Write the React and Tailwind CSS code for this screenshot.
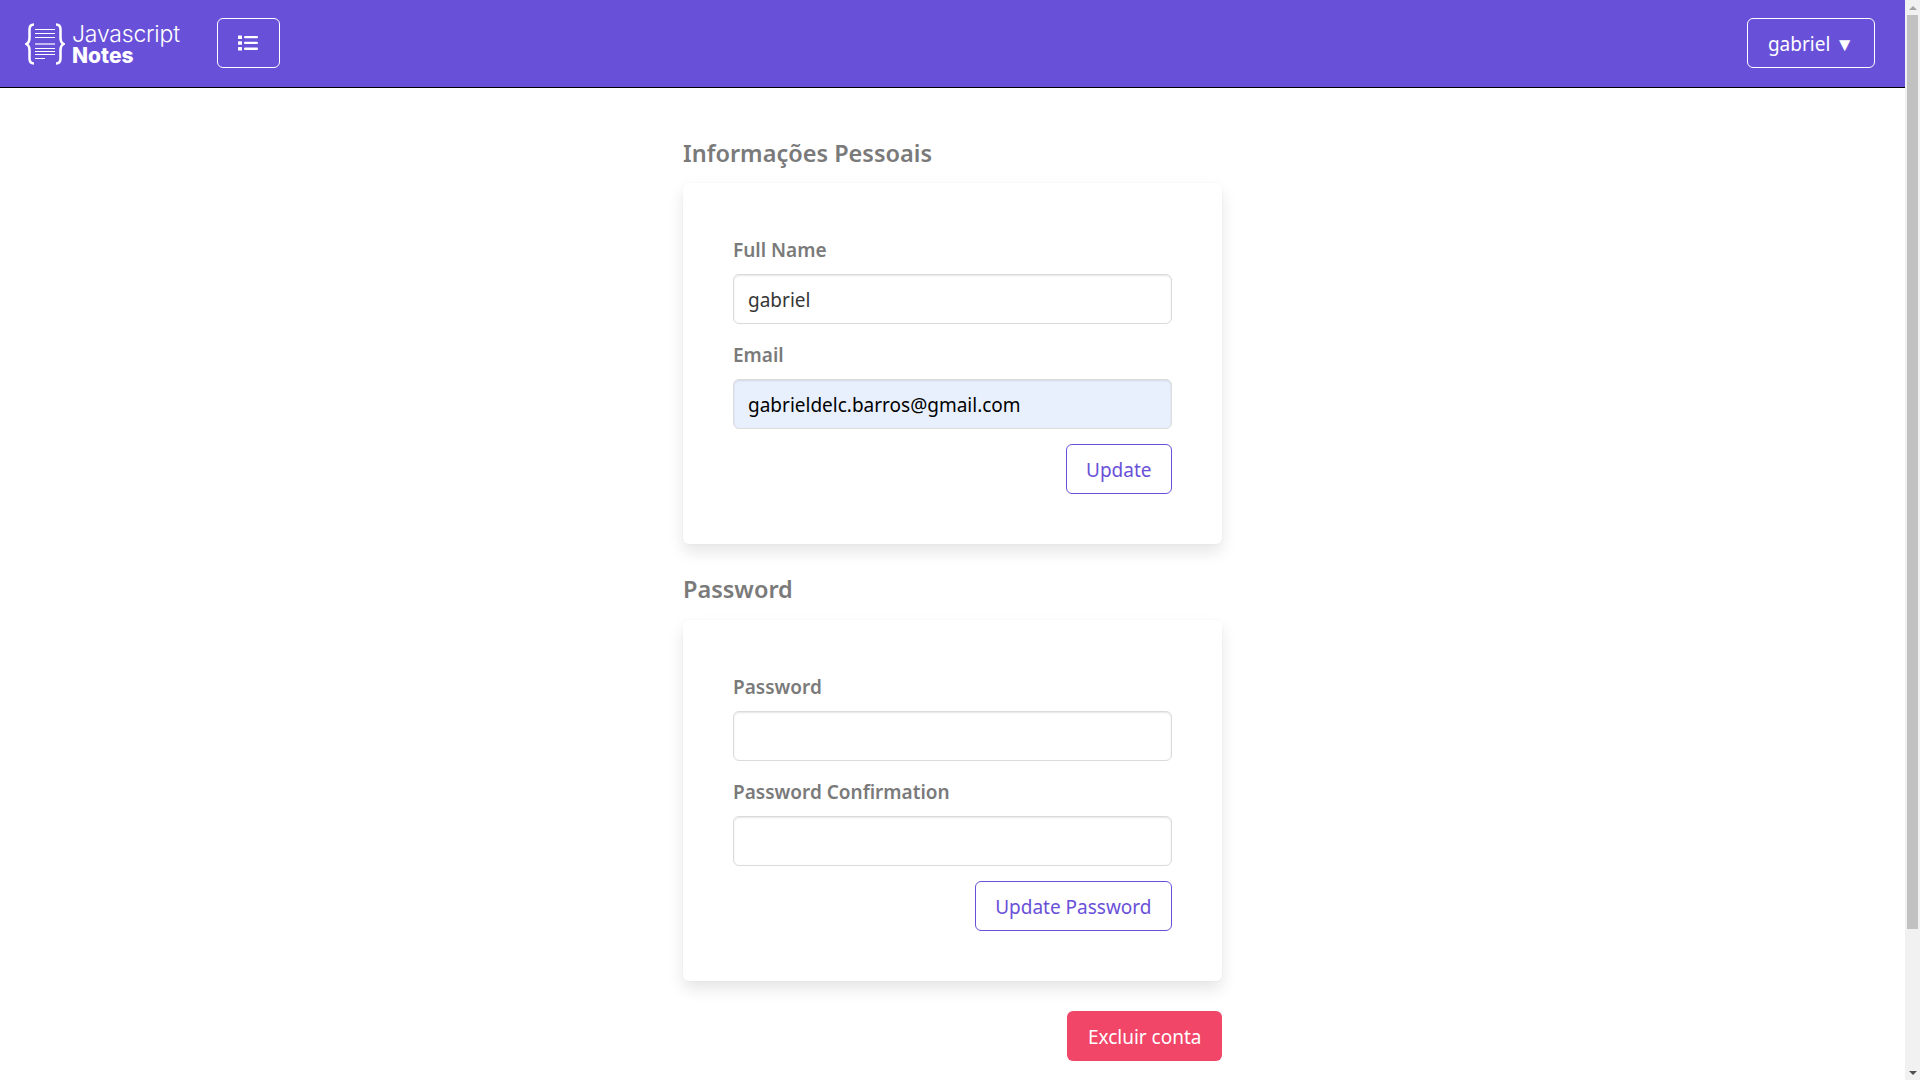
const FONT = "font-['Noto_Sans',sans-serif]";

function Logo() {
  return (
    <div className="flex items-center gap-[7px]">
      <svg width="40" height="42" viewBox="0 0 40 42" fill="none" stroke="white">
        <path d="M9 1.500C5.500 1.500 4.500 3.500 4.500 6.500v8.500c0 3-1 5-3 6 2 1 3 3 3 6v8.500c0 3 1 5 4.500 5" strokeWidth="2.500" />
        <path d="M31 1.500c3.500 0 4.500 2 4.500 5v8.500c0 3 1 5 3 6-2 1-3 3-3 6v8.500c0 3-1 5-4.500 5" strokeWidth="2.500" />
        <path d="M10 6.500h20M10 10.500h20M10 14.500h20M10 25.500h20M10 28.500h20M10 31.500h20M10 35.500h10" strokeWidth="1" />
        <path d="M10 21h20" strokeWidth="2" strokeOpacity="0.6" />
      </svg>
      <div className="mt-[2px] font-['Inter',sans-serif] text-white">
        <div className="text-[23px] leading-[21px] font-light tracking-[-0.2px]">Javascript</div>
        <div className="text-[21px] leading-[21px] font-extrabold">Notes</div>
      </div>
    </div>
  );
}

function ListIcon() {
  return (
    <svg width="20" height="16" viewBox="0 0 20 16" fill="white">
      <rect x="0" y="0.500" width="4" height="3.500" rx="0.500" />
      <rect x="0" y="6.200" width="4" height="3.500" rx="0.500" />
      <rect x="0" y="12" width="4" height="3.500" rx="0.500" />
      <rect x="6" y="1" width="14" height="2.300" rx="1" />
      <rect x="6" y="6.800" width="14" height="2.300" rx="1" />
      <rect x="6" y="12.600" width="14" height="2.300" rx="1" />
    </svg>
  );
}

function Field({ label, value, autofilled, type = "text" }) {
  return (
    <div className="mb-3">
      <label className="block h-[35px] pt-1 mb-2 text-[19px] leading-[30px] font-semibold text-[#7a7a7a]">
        {label}
      </label>
      <input
        type={type}
        defaultValue={value}
        readOnly
        className={`block w-full h-[50px] px-[14px] pt-[2px] rounded-[6px] border text-[19px] outline-none shadow-[inset_0_1px_2px_rgba(10,10,10,0.1)] ${
          autofilled
            ? "bg-[#e8f0fe] border-[#dbdbdb] text-black"
            : "bg-white border-[#dbdbdb] text-[#363636]"
        }`}
      />
    </div>
  );
}

function OutlineButton({ children }) {
  return (
    <button className="h-[50px] px-[19.500px] pt-[2px] rounded-[6px] border border-[#6950d8] bg-white text-[19px] text-[#6950d8]">
      {children}
    </button>
  );
}

function Card({ children }) {
  return (
    <div className="bg-white rounded-[6px] pt-12 pb-[50px] px-[50px] shadow-[0_8px_16px_rgba(10,10,10,0.1),0_0_0_1px_rgba(10,10,10,0.01)]">
      {children}
    </div>
  );
}

function Scrollbar() {
  return (
    <div className="w-[15px] h-full shrink-0 bg-[#f1f1f1] flex flex-col items-center">
      <div className="h-[15px] flex items-center justify-center shrink-0">
        <div className="w-0 h-0 border-x-[4px] border-x-transparent border-b-[4px] border-b-[#a3a3a3]" />
      </div>
      <div className="w-[11px] h-[914px] bg-[#c1c1c1] shrink-0" />
      <div className="flex-1" />
      <div className="h-[15px] flex items-center justify-center shrink-0">
        <div className="w-0 h-0 border-x-[4px] border-x-transparent border-t-[4px] border-t-[#505050]" />
      </div>
    </div>
  );
}

export default function App() {
  return (
    <div className={`flex h-screen overflow-hidden bg-white ${FONT}`}>
      <div className="flex-1 min-w-0 overflow-hidden">
        <nav className="h-[88px] bg-[#6950d8] border-b border-black flex items-start justify-between pt-[18px] pl-[25px] pr-[30px]">
          <div className="flex items-center gap-[37px]">
            <div className="mt-[1px]">
              <Logo />
            </div>
            <button className="w-[63px] h-[50px] rounded-[6px] border border-white flex items-center justify-center">
              <ListIcon />
            </button>
          </div>
          <button className="w-[128px] h-[50px] pt-[2px] rounded-[6px] border border-white text-white text-[19px]">
            gabriel ▼
          </button>
        </nav>

        <main className="w-[539px] mx-auto pt-[47px]">
          <h2 className="text-[23.500px] leading-[36px] font-semibold text-[#7a7a7a] mb-3">
            Informações Pessoais
          </h2>
          <Card>
            <Field label="Full Name" value="gabriel" />
            <Field label="Email" value="gabrieldelc.barros@gmail.com" autofilled />
            <div className="flex justify-end mt-[15px]">
              <OutlineButton>Update</OutlineButton>
            </div>
          </Card>

          <h2 className="text-[23.500px] leading-[36px] font-semibold text-[#7a7a7a] mt-[27px] mb-[13px]">
            Password
          </h2>
          <Card>
            <Field label="Password" type="password" />
            <Field label="Password Confirmation" type="password" />
            <div className="flex justify-end mt-[15px]">
              <OutlineButton>Update Password</OutlineButton>
            </div>
          </Card>

          <div className="flex justify-end mt-[30px]">
            <button className="h-[50px] px-[20.500px] pt-[2px] rounded-[6px] bg-[#f14668] text-white text-[19px]">
              Excluir conta
            </button>
          </div>
        </main>
      </div>
      <Scrollbar />
    </div>
  );
}
